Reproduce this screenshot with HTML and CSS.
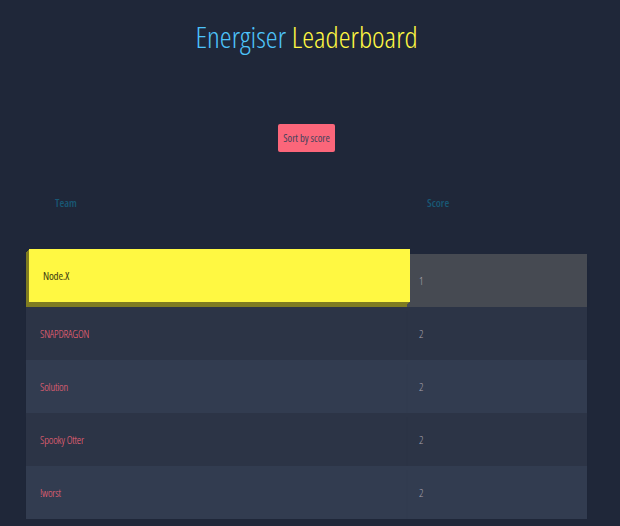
FILE: index.html
```
<!DOCTYPE html>
<html>
<head>
<meta charset="utf-8">
<link rel="stylesheet" href="styles.css">
</head>
<body>
<div class="page">
<h1 class="title"><span class="blue">Energiser</span> <span class="yellow">Leaderboard</span></h1>
<div class="actions"><button class="sort-btn">Sort by score</button></div>
<table class="board">
  <colgroup><col class="col-team"><col class="col-score"></colgroup>
  <thead>
    <tr><th class="th-team">Team</th><th class="th-score">Score</th></tr>
  </thead>
  <tbody>
    <tr class="row hover"><td class="team active">Node.X</td><td class="score">1</td></tr>
    <tr class="row"><td class="team">SNAPDRAGON</td><td class="score">2</td></tr>
    <tr class="row"><td class="team">Solution</td><td class="score">2</td></tr>
    <tr class="row"><td class="team">Spooky Otter</td><td class="score">2</td></tr>
    <tr class="row"><td class="team">!worst</td><td class="score">2</td></tr>
  </tbody>
</table>
</div>
</body>
</html>
```
FILE: styles.css
```
html, body {
  margin: 0;
  padding: 0;
  background: #1F2739;
}
body {
  font-family: "Open Sans", "Liberation Sans Narrow", sans-serif;
  font-stretch: 75%;
  color: #A7A1AE;
}
.page {
  width: 613px;
}
.title {
  margin: 19px 0 0;
  text-align: center;
  font-weight: 300;
  font-size: 30px;
  line-height: 36px;
}
.blue { color: #4DC3FA; }
.yellow { color: #FFF842; }
.actions {
  margin-top: 69px;
  display: flex;
  justify-content: center;
}
.sort-btn {
  width: 57px;
  height: 28px;
  padding: 0;
  border: none;
  border-radius: 2px;
  background: #FB667A;
  color: #45435A;
  font-family: inherit;
  font-stretch: 75%;
  font-size: 10.5px;
}
.board {
  margin: 23px auto 0;
  width: 561px;
  border-spacing: 0;
  table-layout: fixed;
  font-size: 11px;
  line-height: 14px;
}
.col-team { width: 381px; }
.board th {
  text-align: left;
  color: #185875;
  font-weight: 600;
  background: #1F2739;
  padding: 21px 0 44px;
}
.th-team { padding-left: 29px !important; }
.th-score { padding-left: 20px !important; }
.board td {
  height: 53px;
  box-sizing: border-box;
  padding: 0 0 0 14px;
  box-shadow: 0 2px 2px -2px #0E1119;
  font-weight: 300;
  letter-spacing: -0.2px;
}
.row:nth-child(odd) { background: #323C50; }
.row:nth-child(even) { background: #2C3446; }
.row.hover {
  background: #464A52;
  box-shadow: 0 6px 6px -6px #0E1119;
}
.team { color: #FB667A; }
.score { color: #A7A1AE; padding-left: 12px !important; }
.team.active {
  background: #FFF842;
  color: #403E10;
  font-weight: 400;
  transform: translate(3px, -5px);
  box-shadow: -1px 1px #7F7C21, -2px 2px #7F7C21, -3px 3px #7F7C21, -3px 4px #7F7C21, -3px 5px #7F7C21;
}
```
